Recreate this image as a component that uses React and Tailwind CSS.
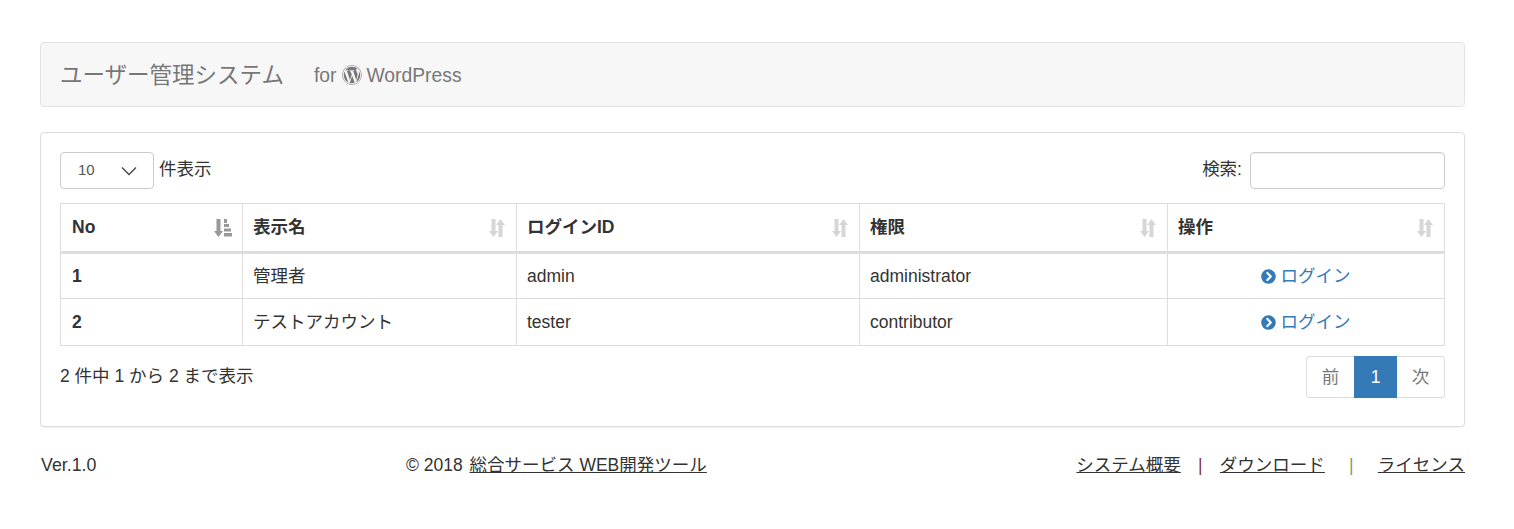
import React from "react";
import { FaWordpress, FaChevronCircleRight } from "react-icons/fa";

const FONT = { fontFamily: '"Liberation Sans", "Noto Sans CJK JP", sans-serif' };

const SortIcon = () => (
  <svg width="18" height="18" viewBox="0 0 18 18" className="text-[#d6d6d6]" fill="currentColor">
    <path d="M3.500 0h4v12H10l-4.500 6L1 12h2.500z" />
    <path d="M10.500 18V6H8l4.500-6L17 6h-2.500v12z" />
  </svg>
);

const SortedIcon = () => (
  <svg width="18" height="18" viewBox="0 0 18 18" className="text-[#999]" fill="currentColor">
    <path d="M2.500 0h4v12H9l-4.500 6L0 12h2.500z" />
    <path d="M10 0h3v4h-3zM10 5h5v3h-5zM10 9.500h7v3h-7zM10 14h8v3.500h-8z" />
  </svg>
);

const columns = [
  { label: "No", width: "w-[182px]", pad: "pl-[11px] pr-[10px]", sorted: true },
  { label: "表示名", width: "w-[274px]", pad: "pl-[10px] pr-[10px]" },
  { label: "ログインID", width: "w-[343px]", pad: "pl-[10px] pr-[10px]" },
  { label: "権限", width: "w-[308px]", pad: "pl-[10px] pr-[10px]" },
  { label: "操作", width: "w-[277px]", pad: "pl-[10px] pr-[10px]" },
];

const rows = [
  { no: 1, name: "管理者", id: "admin", role: "administrator", h: "h-[46px]" },
  { no: 2, name: "テストアカウント", id: "tester", role: "contributor", h: "h-[47px]" },
];

export default function App() {
  return (
    <div style={FONT} className="w-[1514px] h-[529px] bg-white pl-10 pr-[49px] pt-[42px] text-[17.5px] text-[#333] overflow-hidden">
      <div className="h-[65px] flex items-center pl-[19px] bg-[#f7f7f7] border border-[#e3e3e3] rounded text-[#777]">
        <span className="text-[22.500px] w-[254px] pt-[2px]">ユーザー管理システム</span>
        <span className="text-[19.300px] flex items-center pt-[4px]">
          for
          <FaWordpress className="mx-[5px] mb-[4px] text-[20px]" />
          WordPress
        </span>
      </div>

      <div className="mt-[25px] h-[295px] p-[19px] bg-white border border-[#ddd] rounded shadow-[0_1px_1px_rgba(0,0,0,0.05)]">
        <div className="flex justify-between h-[37px]">
          <div className="flex items-start">
            <div className="w-[94px] h-[37px] flex items-center justify-between pl-[17px] pr-4 border border-[#ccc] rounded text-[15px] text-[#555]">
              10
              <svg width="16" height="10" viewBox="0 0 16 10" fill="none" stroke="#444" strokeWidth="1.300">
                <path d="M1 1.500l7 7 7-7" />
              </svg>
            </div>
            <span className="ml-[5px] mt-[4px]">件表示</span>
          </div>
          <div className="flex items-start">
            <span className="mt-[4px] mr-2">検索:</span>
            <input
              aria-label="検索"
              className="w-[195px] h-[37px] border border-[#ccc] rounded shadow-[inset_0_1px_1px_rgba(0,0,0,0.075)]"
            />
          </div>
        </div>

        <table className="mt-[14px] w-[1384px] table-fixed border-collapse border border-[#ddd]">
          <thead>
            <tr className="h-[49px] border-b-[3px] border-[#ddd]">
              {columns.map((col) => (
                <th key={col.label} className={`${col.width} ${col.pad} border border-[#ddd] border-b-[3px] text-left font-bold`}>
                  <div className="flex items-center justify-between">
                    {col.label}
                    {col.sorted ? <SortedIcon /> : <SortIcon />}
                  </div>
                </th>
              ))}
            </tr>
          </thead>
          <tbody>
            {rows.map((row) => (
              <tr key={row.no} className={row.h}>
                <td className="border border-[#ddd] pl-[11px] font-bold">{row.no}</td>
                <td className="border border-[#ddd] pl-[10px]">{row.name}</td>
                <td className="border border-[#ddd] pl-[10px]">{row.id}</td>
                <td className="border border-[#ddd] pl-[10px]">{row.role}</td>
                <td className="border border-[#ddd]">
                  <div className="flex items-center justify-center gap-[5px] text-[#337ab7] pr-[1px]">
                    <FaChevronCircleRight className="text-[15px]" />
                    ログイン
                  </div>
                </td>
              </tr>
            ))}
          </tbody>
        </table>

        <div className="mt-[10px] flex justify-between items-start">
          <span className="mt-[7px]">2 件中 1 から 2 まで表示</span>
          <div className="flex h-[42px] text-[#777]">
            <span className="w-[48px] flex items-center justify-center border border-[#ddd] border-r-0 rounded-l">前</span>
            <span className="w-[43px] flex items-center justify-center bg-[#337ab7] text-white">1</span>
            <span className="w-[48px] flex items-center justify-center border border-[#ddd] border-l-0 rounded-r">次</span>
          </div>
        </div>
      </div>

      <div className="mt-[28px] flex items-center h-5">
        <span className="w-[366px] pl-px text-[17.8px]">Ver.1.0</span>
        <span>
          © 2018 <a className="underline ml-[2px]">総合サービス WEB開発ツール</a>
        </span>
        <div className="ml-auto flex items-center">
          <a className="underline">システム概要</a>
          <span className="w-[39px] text-center text-[#7a3a30]">|</span>
          <a className="underline">ダウンロード</a>
          <span className="w-[53px] text-center text-[#7f9a70]">|</span>
          <a className="underline">ライセンス</a>
        </div>
      </div>
    </div>
  );
}
